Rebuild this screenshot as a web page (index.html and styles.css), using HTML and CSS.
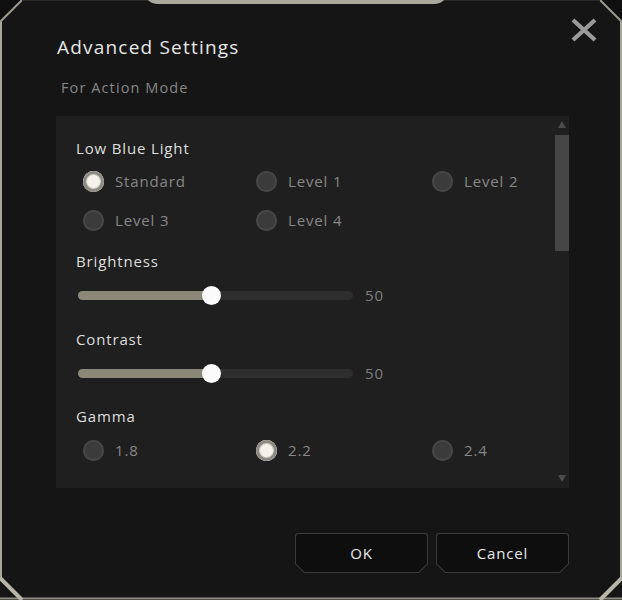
FILE: index.html
```html
<!DOCTYPE html>
<html lang="en">
<head>
<meta charset="utf-8">
<title>Advanced Settings</title>
<link rel="stylesheet" href="styles.css">
</head>
<body>
<div class="dialog">
  <svg class="frame" viewBox="0 0 622 600" width="622" height="600" aria-hidden="true">
    <path d="M0 0 H22 L0 22 Z" fill="#0f0f0f"/>
    <path d="M622 0 H600 L622 22 Z" fill="#0f0f0f"/>
    <path d="M0 22 L22 0" stroke="#9d9a8e" stroke-width="2" fill="none"/>
    <path d="M600 0 L622 22" stroke="#9d9a8e" stroke-width="2" fill="none"/>
    <path d="M22 0.5 H150" stroke="#2a2a2a" stroke-width="1"/>
    <path d="M440 0.5 H600" stroke="#2a2a2a" stroke-width="1"/>
    <path d="M148 0 H444 Q441 3.5 435 4 H157 Q151 3.5 148 0 Z" fill="#aaa79b"/>
    <path d="M1 22 V580" stroke="#a9a69a" stroke-width="2"/>
    <path d="M621 22 V580" stroke="#a9a69a" stroke-width="2"/>
    <path d="M0 598.5 H622" stroke="#8f8c82" stroke-width="2"/>
    <path d="M0 578 L22 600" stroke="#b8b5a8" stroke-width="4"/>
    <path d="M622 578 L600 600" stroke="#b8b5a8" stroke-width="4"/>
  </svg>

  <header class="head">
    <h1 class="title">Advanced Settings</h1>
    <button class="close" aria-label="Close">
      <svg viewBox="0 0 28 24" width="28" height="24">
        <path d="M3 2 L25 22 M25 2 L3 22" stroke="#9a9a9a" stroke-width="4.2" stroke-linecap="butt"/>
      </svg>
    </button>
  </header>
  <p class="subtitle">For Action Mode</p>

  <section class="panel">
    <div class="content">
      <h2 class="label">Low Blue Light</h2>
      <div class="radios">
        <div class="opt"><span class="radio on"></span><span>Standard</span></div>
        <div class="opt"><span class="radio"></span><span>Level 1</span></div>
        <div class="opt"><span class="radio"></span><span>Level 2</span></div>
        <div class="opt"><span class="radio"></span><span>Level 3</span></div>
        <div class="opt"><span class="radio"></span><span>Level 4</span></div>
      </div>

      <h2 class="label l-bright">Brightness</h2>
      <div class="slider">
        <div class="track"><div class="fill" style="width:133px"></div><span class="thumb" style="left:133px"></span></div>
        <span class="val">50</span>
      </div>

      <h2 class="label l-contrast">Contrast</h2>
      <div class="slider">
        <div class="track"><div class="fill" style="width:133px"></div><span class="thumb" style="left:133px"></span></div>
        <span class="val">50</span>
      </div>

      <h2 class="label l-gamma">Gamma</h2>
      <div class="radios gamma">
        <div class="opt"><span class="radio"></span><span>1.8</span></div>
        <div class="opt"><span class="radio on"></span><span>2.2</span></div>
        <div class="opt"><span class="radio"></span><span>2.4</span></div>
      </div>
    </div>
    <div class="scrollbar">
      <span class="arrow up"></span>
      <span class="thumb-bar"></span>
      <span class="spacer"></span>
      <span class="arrow down"></span>
    </div>
  </section>

  <footer class="actions">
    <button class="btn"><span>OK</span></button>
    <button class="btn"><span>Cancel</span></button>
  </footer>
</div>
</body>
</html>
```

FILE: styles.css
```css
* { box-sizing: border-box; }
html, body { margin: 0; padding: 0; background: #141414; }
body { font-family: "Open Sans", "Liberation Sans", sans-serif; }

.dialog {
  position: relative;
  width: 622px;
  height: 600px;
  background: #151515;
  padding: 35px 53px 0 56px;
  display: flex;
  flex-direction: column;
  overflow: hidden;
}
.frame { position: absolute; left: 0; top: 0; pointer-events: none; }

.head { display: flex; align-items: center; height: 24px; }
.title {
  margin: 0 0 0 1px;
  font-size: 19px;
  line-height: 24px;
  font-weight: 400;
  letter-spacing: 1.2px;
  color: #e6e6e6;
}
.close {
  position: absolute;
  right: 24px;
  top: 18px;
  width: 28px;
  height: 24px;
  padding: 0;
  border: 0;
  background: none;
  display: block;
}
.close svg { display: block; }

.subtitle {
  margin: 19px 0 0 5px;
  font-size: 14.5px;
  line-height: 20px;
  letter-spacing: 1.1px;
  color: #878787;
}

.panel {
  margin-top: 18px;
  height: 372px;
  background: #1f1f1f;
  display: flex;
}
.content { flex: 1; padding: 22px 0 0 20px; }
.label {
  margin: 0;
  font-size: 15px;
  line-height: 20px;
  font-weight: 400;
  letter-spacing: 0.85px;
  color: #dedede;
}
.l-bright { margin-top: 12px; }
.l-contrast { margin-top: 24px; }
.l-gamma { margin-top: 23px; }

.radios {
  margin-top: 4px;
  padding-left: 7px;
  display: grid;
  grid-template-columns: 173px 176px 1fr;
  grid-auto-rows: 38px;
  row-gap: 1px;
}
.radios.gamma { margin-top: 5px; }
.opt {
  display: flex;
  align-items: center;
  gap: 11px;
  font-size: 15px;
  letter-spacing: 0.85px;
  color: #878787;
}
.radio {
  width: 21px;
  height: 21px;
  border-radius: 50%;
  background: #3b3b3b;
  box-shadow: inset 0 0 0 2px #464646;
  flex: none;
}
.radio.on {
  background: #f4f2ea;
  box-shadow: inset 0 0 0 3px #8d8b83, inset 0 0 0 4px #cfcdc5;
}

.slider {
  margin-top: 14px;
  height: 20px;
  display: flex;
  align-items: center;
  padding-left: 2px;
}
.track {
  position: relative;
  width: 275px;
  height: 9px;
  border-radius: 5px;
  background: #2e2e2e;
}
.fill {
  height: 100%;
  border-radius: 5px 0 0 5px;
  background: #8b8878;
}
.thumb {
  position: absolute;
  top: 50%;
  width: 19px;
  height: 19px;
  margin: -9.5px 0 0 -9.5px;
  border-radius: 50%;
  background: #fbfbfb;
}
.val {
  margin-left: 12px;
  font-size: 15px;
  letter-spacing: 0.85px;
  color: #7e7e7e;
}

.scrollbar {
  width: 14px;
  display: flex;
  flex-direction: column;
  align-items: center;
  padding: 5px 0 6px;
}
.arrow {
  width: 0;
  height: 0;
  border-left: 4px solid transparent;
  border-right: 4px solid transparent;
}
.arrow.up { border-bottom: 7px solid #4c4c4c; }
.arrow.down { border-top: 7px solid #4c4c4c; }
.thumb-bar {
  margin-top: 7px;
  width: 14px;
  height: 116px;
  background: #464646;
}
.spacer { flex: 1; }

.actions {
  margin-top: 45px;
  display: flex;
  justify-content: flex-end;
  gap: 8px;
}
.btn {
  position: relative;
  width: 133px;
  height: 40px;
  padding: 0;
  border: 0;
  background: #3a3a3a;
  border-radius: 3px 3px 0 0;
  clip-path: polygon(0 0, 100% 0, 100% calc(100% - 9px), calc(100% - 9px) 100%, 9px 100%, 0 calc(100% - 9px));
  font-family: inherit;
  font-size: 15px;
  letter-spacing: 0.85px;
  color: #e8e8e8;
}
.btn::before {
  content: "";
  position: absolute;
  inset: 1px;
  background: #0e0e0e;
  border-radius: 3px 3px 0 0;
  clip-path: polygon(0 0, 100% 0, 100% calc(100% - 8.5px), calc(100% - 8.5px) 100%, 8.5px 100%, 0 calc(100% - 8.5px));
}
.btn span { position: relative; }
```
